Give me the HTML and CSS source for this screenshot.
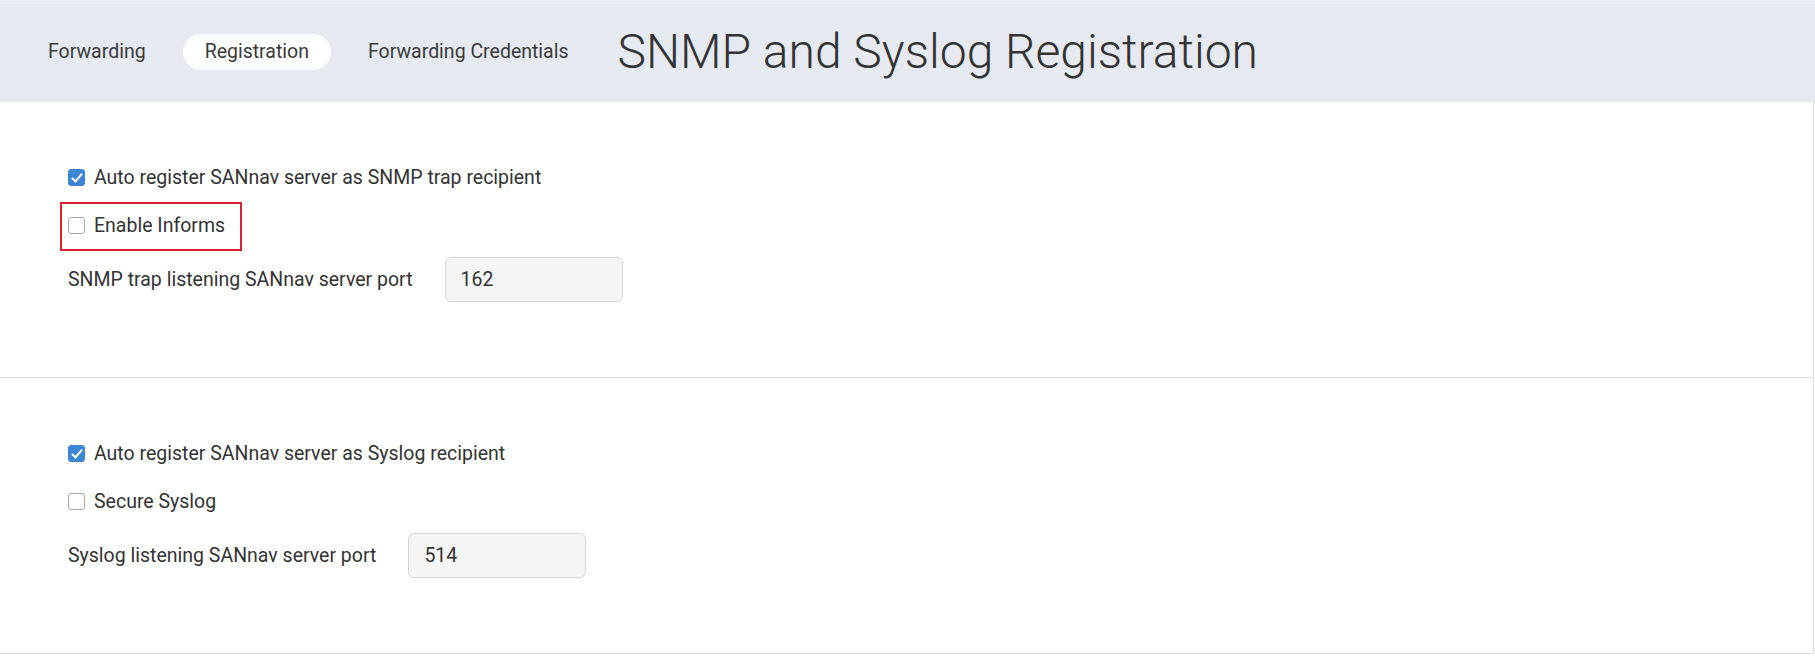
FILE: index.html
```html
<!DOCTYPE html>
<html lang="en">
<head>
  <meta charset="UTF-8">
  <meta name="viewport" content="width=device-width, initial-scale=1.0">
  <title>SNMP and Syslog Registration</title>
  <link rel="stylesheet" href="styles.css">
</head>
<body>

  <header class="top-bar">
    <nav class="tabs">
      <a class="tab" href="#">Forwarding</a>
      <a class="tab active" href="#">Registration</a>
      <a class="tab" href="#">Forwarding Credentials</a>
    </nav>
    <h1 class="page-title">SNMP and Syslog Registration</h1>
  </header>

  <main>
    <!-- SNMP -->
    <section class="panel">
      <label class="check-row">
        <input type="checkbox" checked>
        Auto register SANnav server as SNMP trap recipient
      </label>
      <label class="check-row highlighted">
        <input type="checkbox">
        Enable Informs
      </label>
      <div class="field-row">
        <label for="snmpPort">SNMP trap listening SANnav server port</label>
        <input type="text" id="snmpPort" value="162">
      </div>
    </section>

    <!-- Syslog -->
    <section class="panel">
      <label class="check-row">
        <input type="checkbox" checked>
        Auto register SANnav server as Syslog recipient
      </label>
      <label class="check-row">
        <input type="checkbox">
        Secure Syslog
      </label>
      <div class="field-row">
        <label for="syslogPort">Syslog listening SANnav server port</label>
        <input type="text" id="syslogPort" value="514">
      </div>
    </section>
  </main>

</body>
</html>
```

FILE: styles.css
```css
body {
  margin: 0;
  font-family: Roboto, "Liberation Sans", Arial, sans-serif;
  font-size: 19.5px;
  color: #333;
  background: #fff;
}
.top-bar {
  display: flex;
  align-items: center;
  height: 101px;
  border-top: 1px solid #f3f4f7;
  background-color: #e6e9f0;
  padding-left: 26px;
}
.tabs {
  display: flex;
  align-items: center;
  gap: 15px;
}
.tab {
  display: block;
  height: 36px;
  line-height: 36px;
  padding: 0 22px;
  border-radius: 18px;
  color: #3a3a3a;
  text-decoration: none;
}
.tab.active {
  background: #fff;
}
.page-title {
  margin: 0 0 0 27px;
  font-size: 48px;
  font-weight: 300;
  color: #333;
}
.panel {
  display: flex;
  flex-direction: column;
  align-items: flex-start;
  padding: 60px 68px 75px;
  border-bottom: 1px solid #dcdcdc;
  border-right: 1px solid #dcdcdc;
  margin-right: 1px;
}
.check-row {
  display: flex;
  align-items: center;
  height: 30px;
  gap: 9px;
  margin-bottom: 18px;
  cursor: pointer;
}
.check-row.highlighted {
  margin: -8px 0 7px -8px;
  padding: 6px 15px 9px 6px;
  border: 2px solid #d8222d;
}
.check-row input {
  appearance: none;
  -webkit-appearance: none;
  position: relative;
  width: 17px;
  height: 17px;
  margin: 0;
  border: 1px solid #a9a9a9;
  border-radius: 3px;
  background: #fff;
}
.check-row input:checked {
  border-color: #3c86d3;
  background: #3c86d3;
}
.check-row input:checked::after {
  content: "";
  position: absolute;
  left: 5px;
  top: 1px;
  width: 4px;
  height: 9px;
  border: solid #fff;
  border-width: 0 2px 2px 0;
  transform: rotate(40deg);
}
.field-row {
  display: flex;
  align-items: center;
  margin-top: -1px;
}
.field-row label {
  margin-right: 32px;
}
.field-row input {
  box-sizing: border-box;
  width: 178px;
  height: 45px;
  padding: 0 15px;
  border: 1px solid #d6d6d6;
  border-radius: 6px;
  background: #f5f5f5;
  font-family: inherit;
  font-size: 19.5px;
  color: #333;
}
```
